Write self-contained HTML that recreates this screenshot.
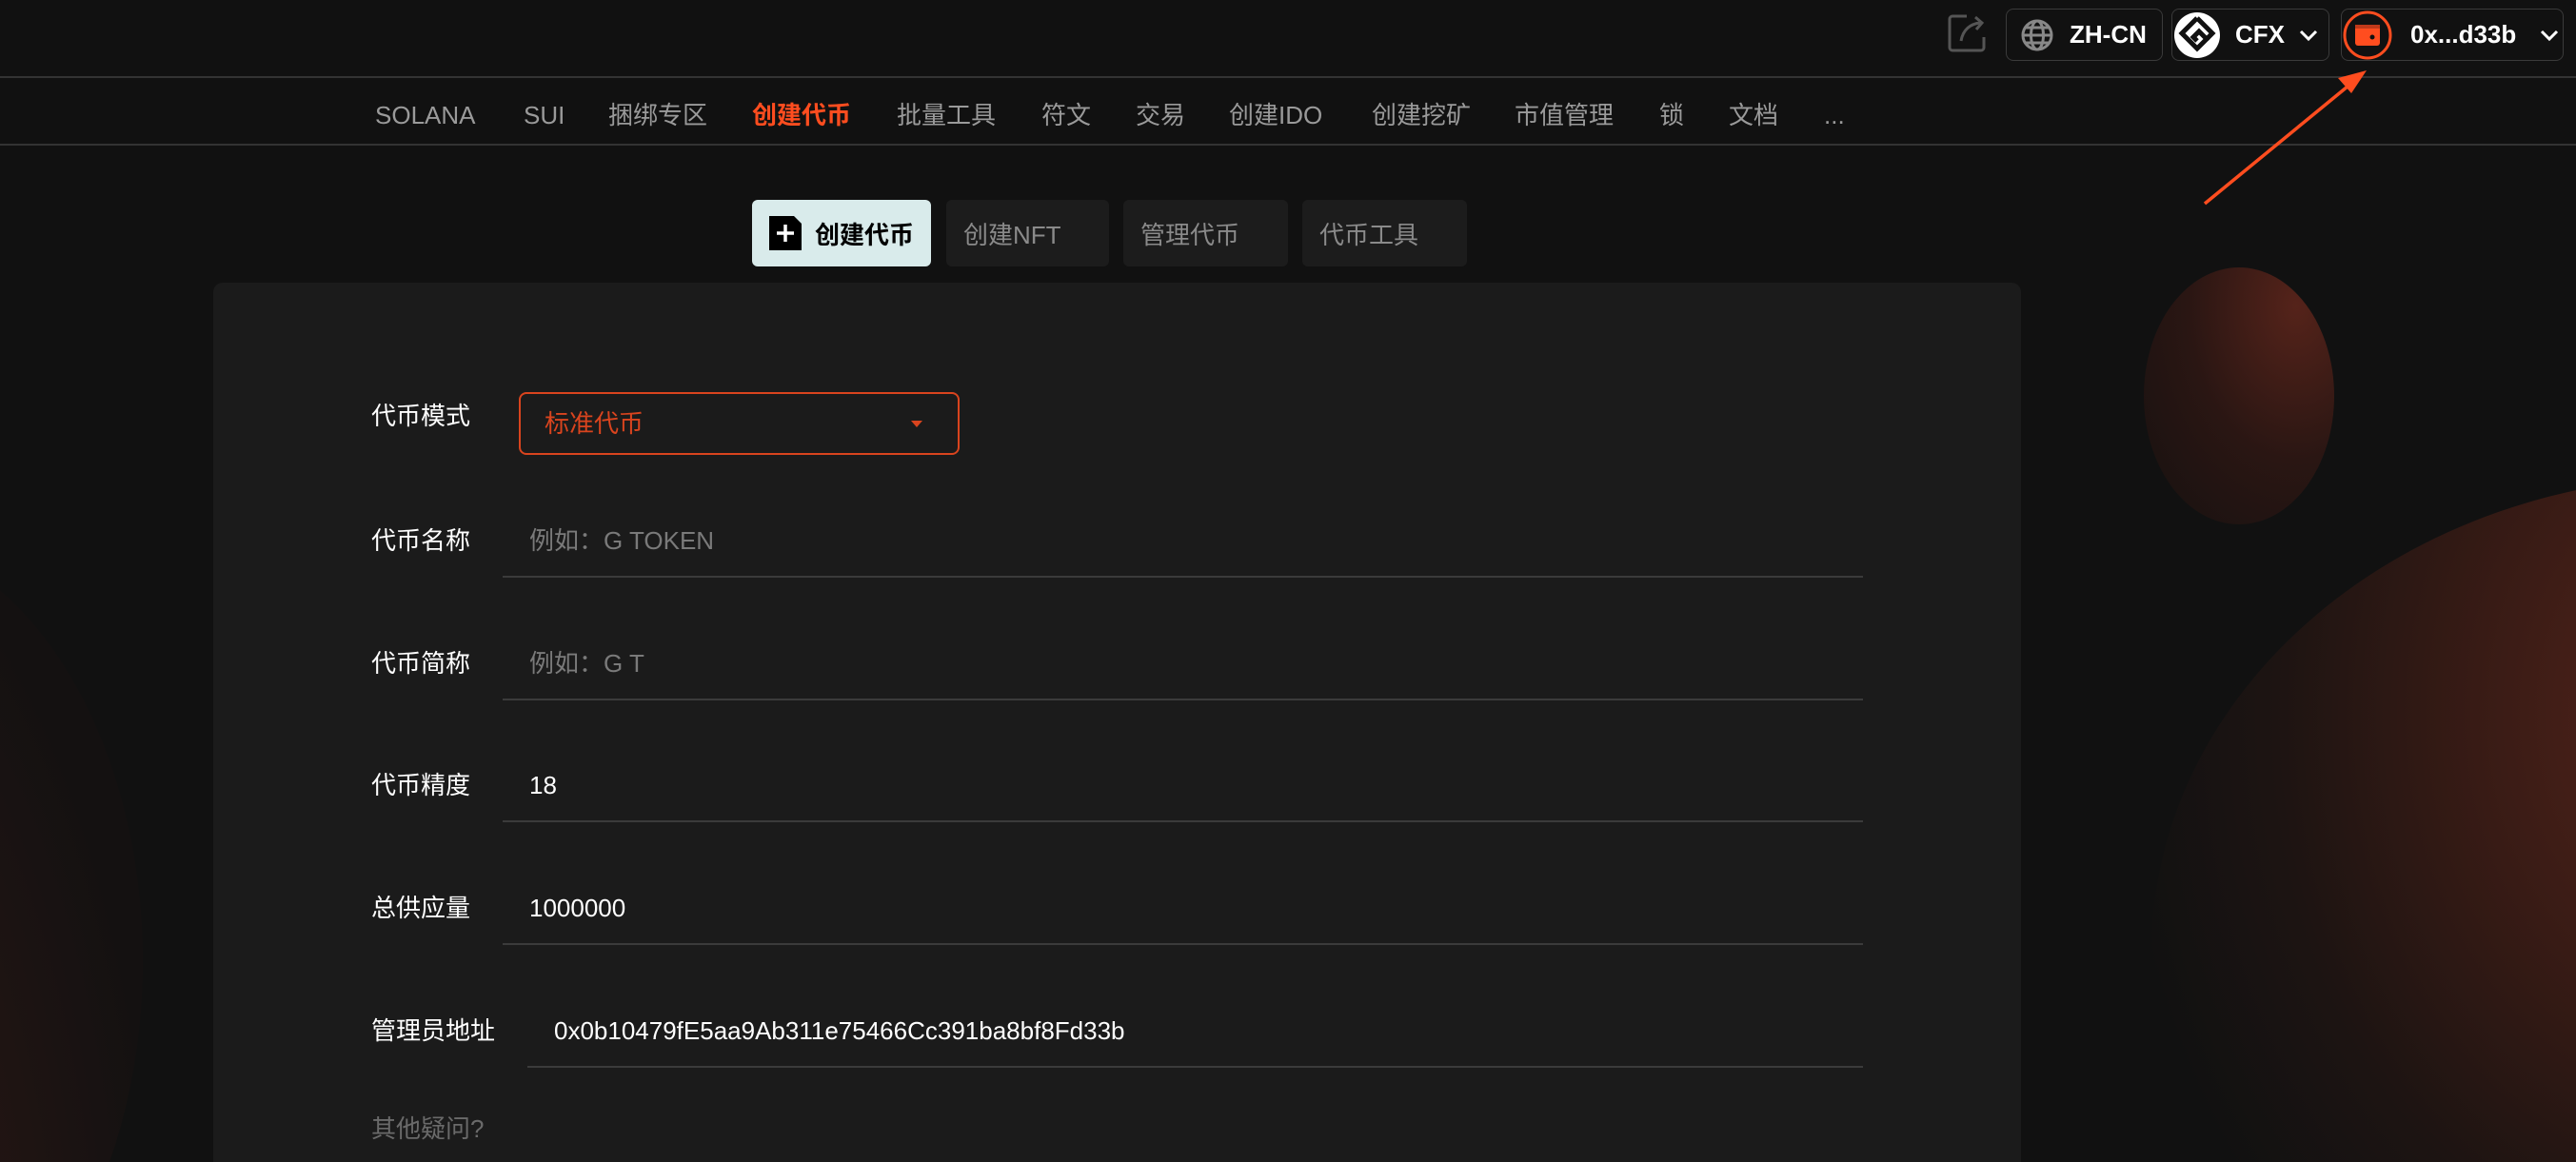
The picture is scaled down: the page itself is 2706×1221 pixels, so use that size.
<!DOCTYPE html>
<html style="width:2706px;height:1221px;overflow:hidden"><head><meta charset="utf-8"><style>
*{margin:0;padding:0;box-sizing:border-box}
body{width:2706px;height:1221px;background:#111;overflow:hidden;position:relative;font-family:"Liberation Sans","Noto Sans CJK SC",sans-serif;color:#fff}
.abs{position:absolute}
.blob{position:absolute;border-radius:50%}
.hline{position:absolute;left:0;width:2706px;height:2px;background:#333}
.nav{position:absolute;top:104px;font-size:26px;color:#9a9a9a;white-space:nowrap;line-height:34px}
.btn{position:absolute;top:9px;height:55px;border:1.5px solid #3a3a3a;border-radius:8px;display:flex;align-items:center;font-weight:bold;font-size:26px}
.tab{position:absolute;top:210px;height:70px;border-radius:6px;background:#1c1c1c;color:#8a8a8a;font-size:26px;display:flex;align-items:center;padding-left:18px}
.card{position:absolute;left:224px;top:297px;width:1899px;height:924px;background:#1b1b1b;border-radius:10px 10px 0 0}
.lbl{position:absolute;left:390px;font-size:26px;color:#fff;line-height:34px}
.val{position:absolute;font-size:26px;line-height:34px}
.ul{position:absolute;height:2px;background:#3b3b3b;right:749px}
</style></head><body>
<div class="abs" style="left:0;top:0;width:2706px;height:1221px;overflow:hidden">
<div class="blob" style="left:2252px;top:281px;width:200px;height:270px;background:radial-gradient(ellipse at 80% 15%,#55231a 0%,#2a1613 50%,#161110 100%)"></div>
<div class="blob" style="left:2260px;top:500px;width:1180px;height:1000px;background:radial-gradient(ellipse at 50% 25%,#55241b 0%,#381b15 30%,#1d1412 55%,#111 75%)"></div>
<div class="blob" style="left:-450px;top:560px;width:600px;height:900px;background:radial-gradient(ellipse at 40% 95%,#381c16 0%,#221513 40%,#141111 75%)"></div>
</div>

<div class="hline" style="top:80px"></div>
<div class="hline" style="top:151px"></div>

<svg class="abs" style="left:2046px;top:13px" width="44" height="42" viewBox="0 0 44 42"><path d="M20 4H5a3 3 0 0 0-3 3v30a3 3 0 0 0 3 3h30a3 3 0 0 0 3-3V26" fill="none" stroke="#555" stroke-width="3"/><path d="M14 30C16 18 24 12 34 11" fill="none" stroke="#555" stroke-width="3"/><path d="M29 5l7 6-6 7" fill="none" stroke="#555" stroke-width="3"/></svg>

<div class="btn" style="left:2107px;width:165px"><svg style="margin-left:14px" width="36" height="36" viewBox="0 0 36 36"><g fill="none" stroke="#888" stroke-width="3"><circle cx="18" cy="18" r="15"/><ellipse cx="18" cy="18" rx="6.5" ry="15"/><path d="M3 18h30M6 10h24M6 26h24"/></g></svg><span style="margin-left:16px">ZH-CN</span></div>
<div class="btn" style="left:2281px;width:166px"><svg width="52" height="52" viewBox="0 0 52 52"><circle cx="26" cy="26" r="24" fill="#fff"/><path d="M26 8L10 24l16 16 10-10-8-8-6 6 4 4" fill="none" stroke="#111" stroke-width="5"/><path d="M26 8l16 16-6 6" fill="none" stroke="#111" stroke-width="5"/></svg><span style="margin-left:14px">CFX</span><svg style="margin-left:14px" width="22" height="14" viewBox="0 0 22 14"><path d="M3 3l8 8 8-8" fill="none" stroke="#fff" stroke-width="3"/></svg></div>
<div class="btn" style="left:2459px;width:234px"><svg width="54" height="54" viewBox="0 0 54 54"><circle cx="27" cy="27" r="24" fill="none" stroke="#ff4d1f" stroke-width="3"/><rect x="14" y="16" width="26" height="22" rx="3" fill="#ff4d1f"/><rect x="14" y="16" width="26" height="4" fill="#c0391a"/><circle cx="32" cy="29" r="2.5" fill="#111"/></svg><span style="margin-left:18px">0x...d33b</span><svg style="margin-left:24px" width="22" height="14" viewBox="0 0 22 14"><path d="M3 3l8 8 8-8" fill="none" stroke="#fff" stroke-width="3"/></svg></div>

<svg class="abs" style="left:0;top:0" width="2706" height="300"><line x1="2316" y1="214" x2="2472" y2="86" stroke="#ff4d1f" stroke-width="3.5"/><path d="M2486 74l-30 8 14 16z" fill="#ff4d1f"/></svg>

<div class="nav" style="left:394px">SOLANA</div>
<div class="nav" style="left:550px">SUI</div>
<div class="nav" style="left:639px">捆绑专区</div>
<div class="nav" style="left:790px;color:#ff4d1f;font-weight:bold">创建代币</div>
<div class="nav" style="left:942px">批量工具</div>
<div class="nav" style="left:1094px">符文</div>
<div class="nav" style="left:1193px">交易</div>
<div class="nav" style="left:1291px">创建IDO</div>
<div class="nav" style="left:1441px">创建挖矿</div>
<div class="nav" style="left:1591px">市值管理</div>
<div class="nav" style="left:1743px">锁</div>
<div class="nav" style="left:1816px">文档</div>
<div class="nav" style="left:1916px">...</div>

<div class="tab" style="left:790px;width:188px;background:#d9ebeb;color:#000;font-weight:bold;padding-left:16px"><svg width="38" height="40" viewBox="0 0 38 40"><path d="M2 2h26l8 8v28H2z" fill="#000"/><path d="M19 11v18M10 20h18" stroke="#fff" stroke-width="3.5"/></svg><span style="margin-left:12px">创建代币</span></div>
<div class="tab" style="left:994px;width:171px">创建NFT</div>
<div class="tab" style="left:1180px;width:173px">管理代币</div>
<div class="tab" style="left:1368px;width:173px">代币工具</div>

<div class="card"></div>
<div class="lbl" style="top:420px">代币模式</div>
<div class="abs" style="left:545px;top:412px;width:463px;height:66px;border:2px solid #d9441e;border-radius:8px"></div>
<div class="val" style="left:572px;top:428px;color:#d9441e">标准代币</div>
<svg class="abs" style="left:956px;top:440px" width="14" height="10"><path d="M1 2h12L7 9z" fill="#d9441e"/></svg>

<div class="lbl" style="top:551px">代币名称</div>
<div class="val" style="left:556px;top:551px;color:#7a7a7a">例如：G TOKEN</div>
<div class="ul" style="left:528px;top:605px"></div>

<div class="lbl" style="top:680px">代币简称</div>
<div class="val" style="left:556px;top:680px;color:#7a7a7a">例如：G T</div>
<div class="ul" style="left:528px;top:734px"></div>

<div class="lbl" style="top:808px">代币精度</div>
<div class="val" style="left:556px;top:808px">18</div>
<div class="ul" style="left:528px;top:862px"></div>

<div class="lbl" style="top:937px">总供应量</div>
<div class="val" style="left:556px;top:937px">1000000</div>
<div class="ul" style="left:528px;top:991px"></div>

<div class="lbl" style="top:1066px">管理员地址</div>
<div class="val" style="left:582px;top:1066px">0x0b10479fE5aa9Ab311e75466Cc391ba8bf8Fd33b</div>
<div class="ul" style="left:554px;top:1120px"></div>

<div class="lbl" style="top:1169px;color:#6a6a6a">其他疑问?</div>
</body></html>
